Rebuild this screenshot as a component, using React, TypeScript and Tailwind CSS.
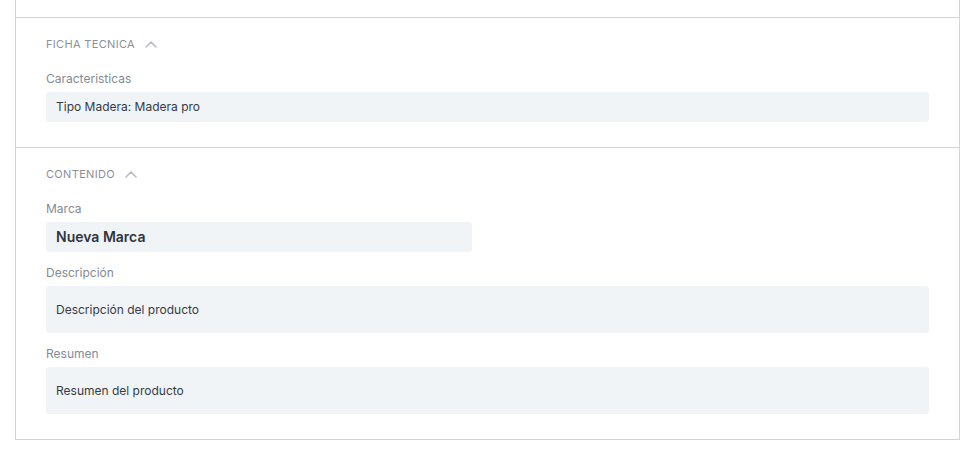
function SectionHeading({ title }: { title: string }) {
  return (
    <div className="flex items-center gap-[10px] text-[11px] leading-4 tracking-[0.03em] text-[#8b9098] uppercase">
      <span>{title}</span>
      <svg width="12" height="7" viewBox="0 0 12 7" fill="none" className="text-[#b9bdc3]">
        <path d="M1 6 L6 1.2 L11 6" stroke="currentColor" strokeWidth="1.6" strokeLinecap="round" strokeLinejoin="round" />
      </svg>
    </div>
  );
}

function Field({
  label,
  value,
  className = "",
  valueClass = "text-xs text-[#353b45]",
}: {
  label: string;
  value: string;
  className?: string;
  valueClass?: string;
}) {
  return (
    <div>
      <p className="text-xs leading-4 text-[#868b93]">{label}</p>
      <div
        className={`mt-[5px] flex items-center rounded-[3px] bg-[#f1f4f7] px-[10px] ${className}`}
      >
        <span className={valueClass}>{value}</span>
      </div>
    </div>
  );
}

export default function App() {
  return (
    <div
      className="min-h-[454px] bg-white pl-[15px] pr-[13px]"
      style={{ fontFamily: "Inter, 'Noto Sans', sans-serif" }}
    >
      <div className="border-x border-b border-[#d2d4d7]">
        <div className="h-[17px]" />

        <section className="border-t border-[#d2d4d7] px-[30px] pt-[18px] pb-[25px]">
          <SectionHeading title="Ficha Tecnica" />
          <div className="mt-[19px]">
            <Field label="Caracteristicas" value="Tipo Madera: Madera pro" className="h-[30px]" />
          </div>
        </section>

        <section className="border-t border-[#d2d4d7] px-[30px] pt-[18px] pb-[25px]">
          <SectionHeading title="Contenido" />
          <div className="mt-[19px] flex flex-col gap-[13px]">
            <Field
              label="Marca"
              value="Nueva Marca"
              className="h-[30px] w-[426px]"
              valueClass="text-sm font-semibold text-[#2f3540]"
            />
            <Field label="Descripción" value="Descripción del producto" className="h-[47px]" />
            <Field label="Resumen" value="Resumen del producto" className="h-[47px]" />
          </div>
        </section>
      </div>
    </div>
  );
}
